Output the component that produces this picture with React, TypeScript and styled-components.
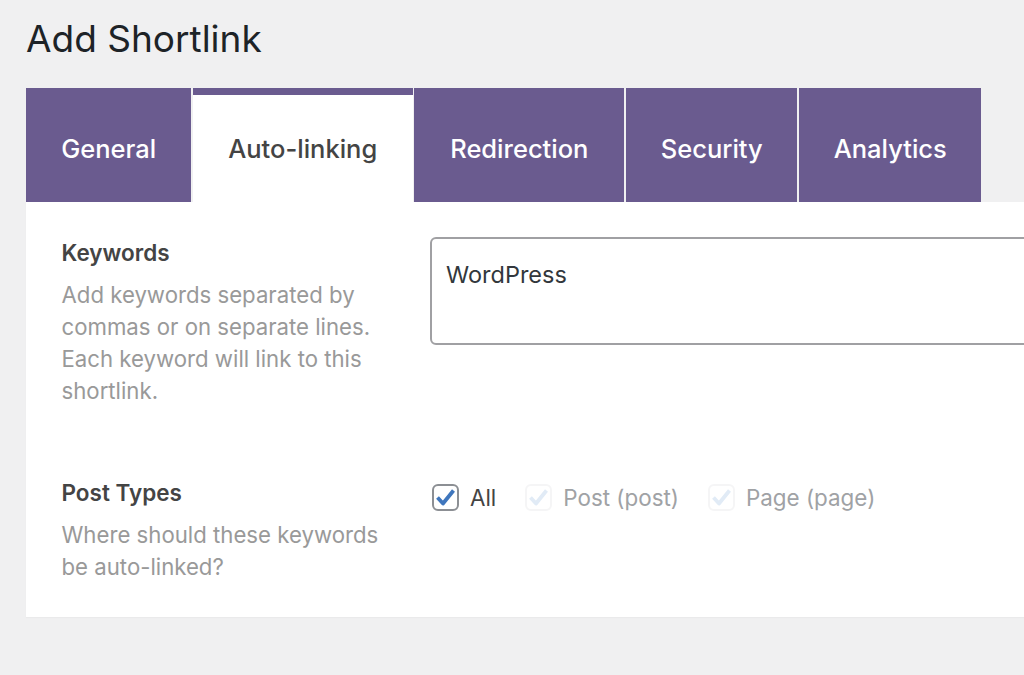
import React from "react";
import styled, { createGlobalStyle } from "styled-components";

const Global = createGlobalStyle`
  html, body { margin: 0; padding: 0; background: #f0f0f1; overflow: hidden; }
  body { font-family: Inter, "Liberation Sans", sans-serif; }
`;
const Page = styled.div`
  width: 1024px; height: 675px; overflow: hidden; box-sizing: border-box;
  padding: 16px 0 0 26px; display: flex; flex-direction: column;
`;
const Title = styled.h1`
  margin: 0 0 26px; height: 46px; font-size: 37px; line-height: 46px; font-weight: 400;
  color: #1d2327;
`;
const Tabs = styled.div`display: flex; height: 114px; gap: 1.5px;`;
const Tab = styled.div<{ $active?: boolean; $w: number }>`
  width: ${p => p.$w}px; box-sizing: border-box; display: flex; align-items: center; justify-content: center;
  font-size: 25.5px; font-weight: 500;
  background: ${p => (p.$active ? "#fff" : "#6a5b8f")};
  color: ${p => (p.$active ? "#444" : "#fff")};
  border-top: ${p => (p.$active ? "7px solid #6a5b8f" : "0")};
  padding-top: ${p => (p.$active ? "0" : "6px")};
  padding-bottom: ${p => (p.$active ? "1px" : "0")};
`;
const Card = styled.div`
  width: 1040px; height: 415px; box-sizing: border-box; background: #fff;
  padding: 35px 0 0 36px; display: flex; flex-direction: column; gap: 70px;
  box-shadow: 0 1px 1px rgba(0,0,0,0.025);
`;
const Row = styled.div`display: grid; grid-template-columns: 368px 1fr;`;
const Label = styled.div`font-size: 22.5px; line-height: 32px; font-weight: 600; color: #444; margin-left: -0.5px;`;
const Help = styled.div`font-size: 22.2px; line-height: 32px; color: #999; margin: 10px 0 0 -0.5px; width: 330px;`;
const Area = styled.div`
  height: 108px; box-sizing: border-box; border: 2px solid #a0a0a3; border-radius: 6px;
  padding: 20px 14px; font-size: 23.5px; line-height: 32px; color: #32373c;
`;
const Checks = styled.div`display: flex; align-items: center; gap: 29px; height: 32px; margin: 4px 0 0 2px;`;
const Check = styled.label`display: flex; align-items: center; gap: 11px;`;
const Box = styled.span<{ $off?: boolean }>`
  width: 27px; height: 27px; box-sizing: border-box; border-radius: 6px; display: flex; align-items: center; justify-content: center;
  border: 2px solid ${p => (p.$off ? "#f5f5f6" : "#8c8f94")};
  color: ${p => (p.$off ? "#e1ebf6" : "#3f76bd")};
`;
const CheckText = styled.span<{ $off?: boolean }>`
  font-size: 22.4px; color: ${p => (p.$off ? "#a0a2a5" : "#444")};
`;

const Mark = () => (
  <svg width="21" height="21" viewBox="0 0 21 21" fill="none">
    <path d="M2.5 10.5 L8 16.5 L18.5 3.5" stroke="currentColor" strokeWidth="3.8" strokeLinejoin="round" />
  </svg>
);

export default function App() {
  return (
    <Page>
      <Global />
      <Title>Add Shortlink</Title>
      <Tabs>
        <Tab $w={165.3}>General</Tab>
        <Tab $w={219.9} $active>Auto-linking</Tab>
        <Tab $w={210.3}>Redirection</Tab>
        <Tab $w={171.5}>Security</Tab>
        <Tab $w={182.5}>Analytics</Tab>
      </Tabs>
      <Card>
        <Row>
          <div>
            <Label>Keywords</Label>
            <Help>Add keywords separated by commas or on separate lines. Each keyword will link to this shortlink.</Help>
          </div>
          <Area>WordPress</Area>
        </Row>
        <Row>
          <div>
            <Label>Post Types</Label>
            <Help>Where should these keywords be auto-linked?</Help>
          </div>
          <Checks>
            <Check><Box><Mark /></Box><CheckText>All</CheckText></Check>
            <Check><Box $off><Mark /></Box><CheckText $off>Post (post)</CheckText></Check>
            <Check><Box $off><Mark /></Box><CheckText $off>Page (page)</CheckText></Check>
          </Checks>
        </Row>
      </Card>
    </Page>
  );
}
